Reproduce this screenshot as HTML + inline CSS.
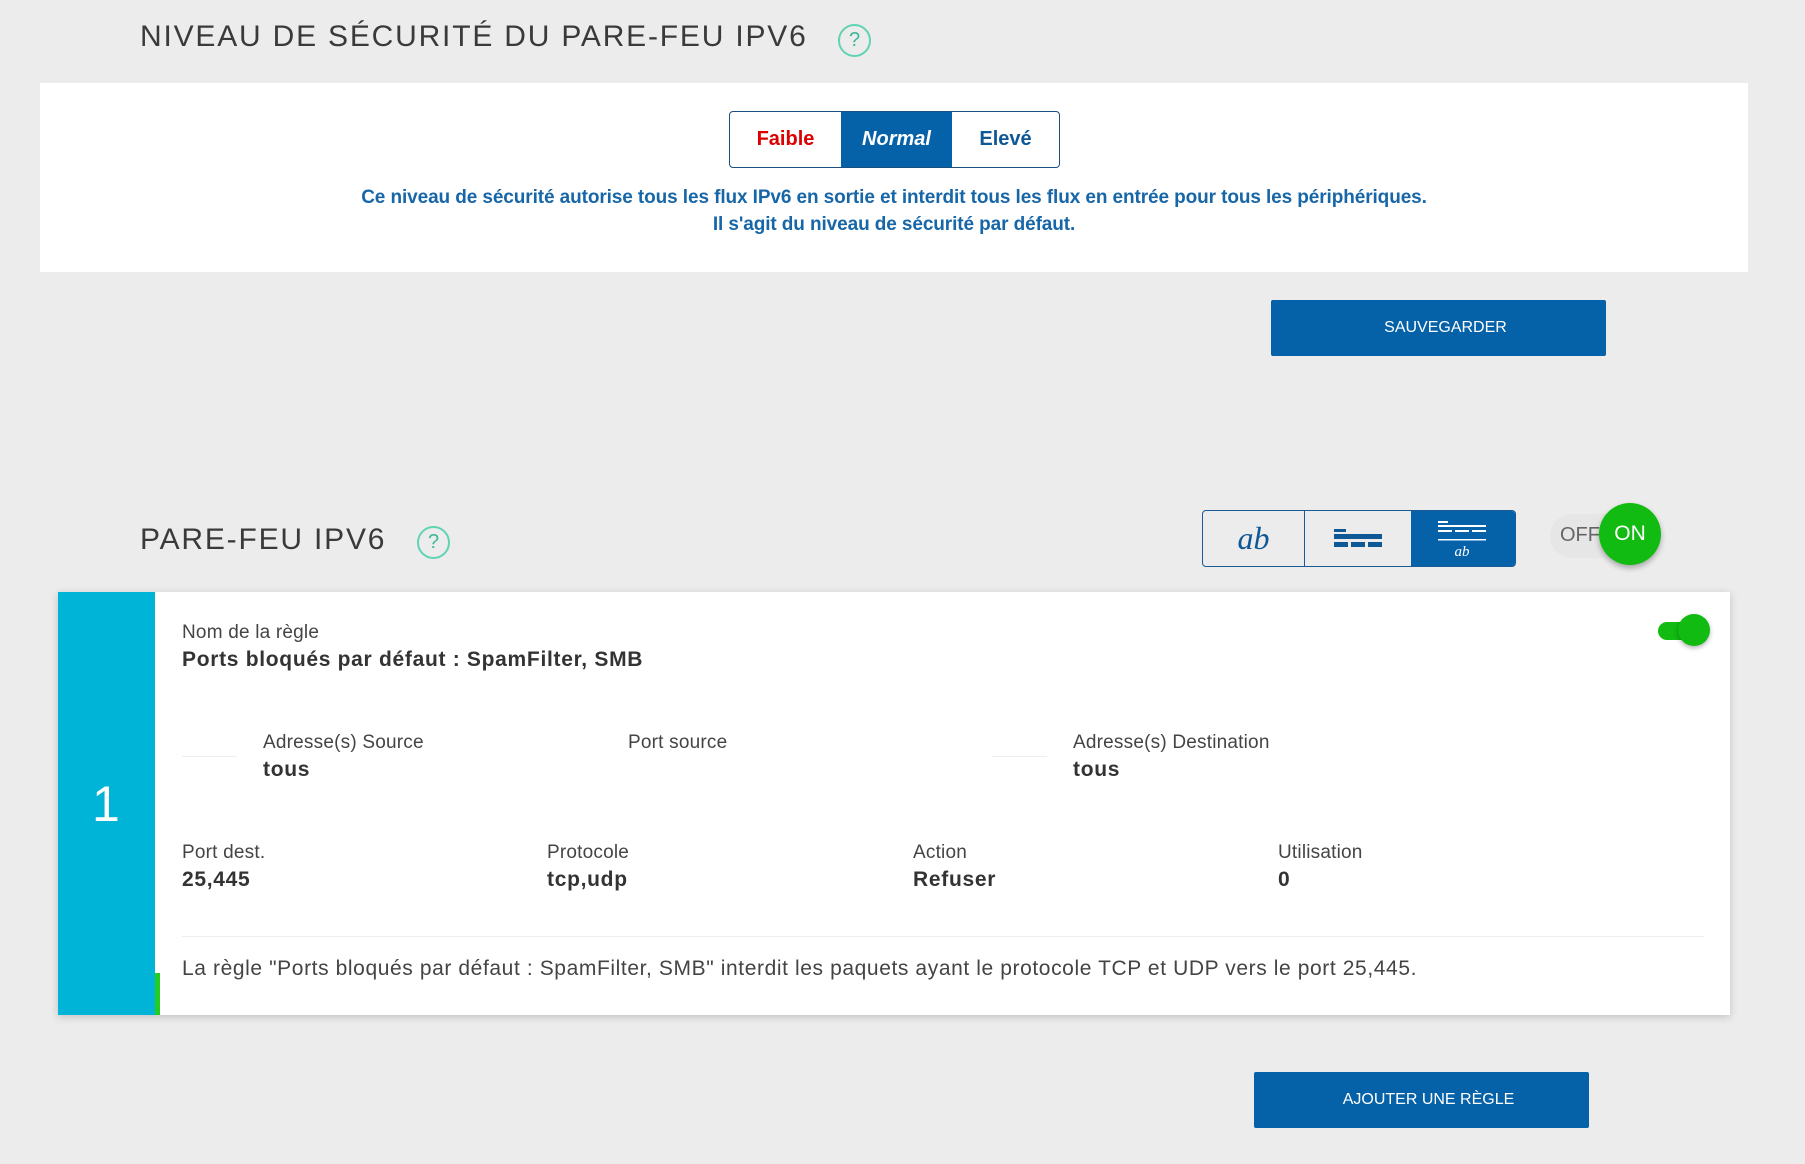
<!DOCTYPE html>
<html><head><meta charset="utf-8"><style>
*{margin:0;padding:0;box-sizing:border-box}
body{width:1805px;height:1164px;background:#ececec;font-family:"Liberation Sans",Arial,sans-serif;position:relative;overflow:hidden;color:#333}
.a{position:absolute;white-space:nowrap}
.h{font-size:30px;color:#3a3a3a;letter-spacing:1.8px}
.q{width:33px;height:33px;border:2px solid #5fd3b3;border-radius:50%;color:#3cb89a;font-size:20px;text-align:center;line-height:29px}
.btn{background:#0561a8;color:#fff;font-size:16px;text-align:center;border-radius:2px;padding-left:14px}
.lbl{font-size:19px;color:#444;letter-spacing:0.2px}
.val{font-size:21px;font-weight:bold;color:#333;letter-spacing:0.7px}
.ln{height:1px;background:#eee}
</style></head><body>
<div class="a h" style="left:140px;top:20px">NIVEAU DE SÉCURITÉ DU PARE-FEU IPV6</div>
<div class="a q" style="left:838px;top:24px">?</div>
<div class="a" style="left:40px;top:83px;width:1708px;height:189px;background:#fff"></div>
<div class="a" style="left:729px;top:111px;width:331px;height:57px;border:1px solid #1b4f80;border-radius:4px;background:#fff;display:flex;overflow:hidden;font-size:20px;font-weight:bold">
<div style="width:111px;text-align:center;line-height:55px;color:#d00">Faible</div>
<div style="width:111px;text-align:center;line-height:55px;background:#0561a8;color:#fff;font-style:italic">Normal</div>
<div style="flex:1;text-align:center;line-height:55px;color:#0f5896">Elevé</div></div>
<div class="a" style="left:40px;width:1708px;top:184px;text-align:center;font-size:19px;font-weight:bold;color:#1766a8;line-height:27px;letter-spacing:-0.1px">Ce niveau de sécurité autorise tous les flux IPv6 en sortie et interdit tous les flux en entrée pour tous les périphériques.<br>Il s'agit du niveau de sécurité par défaut.</div>
<div class="a btn" style="left:1271px;top:300px;width:335px;height:56px;line-height:56px">SAUVEGARDER</div>

<div class="a h" style="left:140px;top:523px">PARE-FEU IPV6</div>
<div class="a q" style="left:417px;top:526px">?</div>
<div class="a" style="left:1202px;top:510px;width:314px;height:57px;border:1px solid #1b5a96;border-radius:4px;display:flex;overflow:hidden">
<div style="width:106px;border-right:1px solid #1b5a96;text-align:center;line-height:55px;color:#0f5896;font-family:'Liberation Serif',serif;font-style:italic;font-size:32px">ab</div>
<div style="width:106px;position:relative"><svg width="106" height="55"><g fill="#0f5896"><rect x="29" y="18" width="12" height="3"/><rect x="29" y="23" width="48" height="5"/><rect x="29" y="31" width="14" height="5"/><rect x="46" y="31" width="14" height="5"/><rect x="63" y="31" width="14" height="5"/></g></svg></div>
<div style="flex:1;background:#0561a8;position:relative"><svg width="104" height="55"><g fill="#fff"><rect x="27" y="10" width="10" height="2"/><rect x="27" y="14" width="48" height="2"/><rect x="27" y="19" width="14" height="2"/><rect x="44" y="19" width="14" height="2"/><rect x="61" y="19" width="14" height="2"/><rect x="27" y="28" width="48" height="1.5"/></g><text x="51" y="45" fill="#fff" font-family="Liberation Serif" font-style="italic" font-size="15" text-anchor="middle">ab</text></svg></div></div>
<div class="a" style="left:1550px;top:514px;width:85px;height:44px;border-radius:22px;background:#e6e6e6"></div>
<div class="a" style="left:1560px;top:524px;font-size:20px;color:#666">OFF</div>
<div class="a" style="left:1599px;top:503px;width:62px;height:62px;border-radius:50%;background:#11bb11;box-shadow:0 3px 6px rgba(0,0,0,.3);color:#fff;font-size:21px;text-align:center;line-height:62px">ON</div>

<div class="a" style="left:58px;top:592px;width:1672px;height:423px;background:#fff;box-shadow:0 2px 8px rgba(0,0,0,.18)"></div>
<div class="a" style="left:58px;top:592px;width:97px;height:423px;background:#00b4d8"></div>
<div class="a" style="left:155px;top:973px;width:5px;height:42px;background:#22cc22"></div>
<div class="a" style="left:92px;top:775px;font-size:50px;color:#fff">1</div>
<div class="a" style="left:1658px;top:622px;width:44px;height:18px;border-radius:9px;background:#11bb11"></div>
<div class="a" style="left:1678px;top:614px;width:32px;height:32px;border-radius:50%;background:#11bb11;box-shadow:0 2px 5px rgba(0,0,0,.3)"></div>

<div class="a lbl" style="left:182px;top:622px">Nom de la règle</div>
<div class="a val" style="left:182px;top:648px">Ports bloqués par défaut : SpamFilter, SMB</div>
<div class="a ln" style="left:182px;top:756px;width:55px"></div>
<div class="a ln" style="left:992px;top:756px;width:55px"></div>
<div class="a lbl" style="left:263px;top:732px">Adresse(s) Source</div>
<div class="a val" style="left:263px;top:758px">tous</div>
<div class="a lbl" style="left:628px;top:732px">Port source</div>
<div class="a lbl" style="left:1073px;top:732px">Adresse(s) Destination</div>
<div class="a val" style="left:1073px;top:758px">tous</div>
<div class="a lbl" style="left:182px;top:842px">Port dest.</div>
<div class="a val" style="left:182px;top:868px">25,445</div>
<div class="a lbl" style="left:547px;top:842px">Protocole</div>
<div class="a val" style="left:547px;top:868px">tcp,udp</div>
<div class="a lbl" style="left:913px;top:842px">Action</div>
<div class="a val" style="left:913px;top:868px">Refuser</div>
<div class="a lbl" style="left:1278px;top:842px">Utilisation</div>
<div class="a val" style="left:1278px;top:868px">0</div>
<div class="a ln" style="left:182px;top:936px;width:1522px"></div>
<div class="a" style="left:182px;top:957px;font-size:21px;color:#444;letter-spacing:0.6px">La règle "Ports bloqués par défaut : SpamFilter, SMB" interdit les paquets ayant le protocole TCP et UDP vers le port 25,445.</div>

<div class="a btn" style="left:1254px;top:1072px;width:335px;height:56px;line-height:56px">AJOUTER UNE RÈGLE</div>
</body></html>
